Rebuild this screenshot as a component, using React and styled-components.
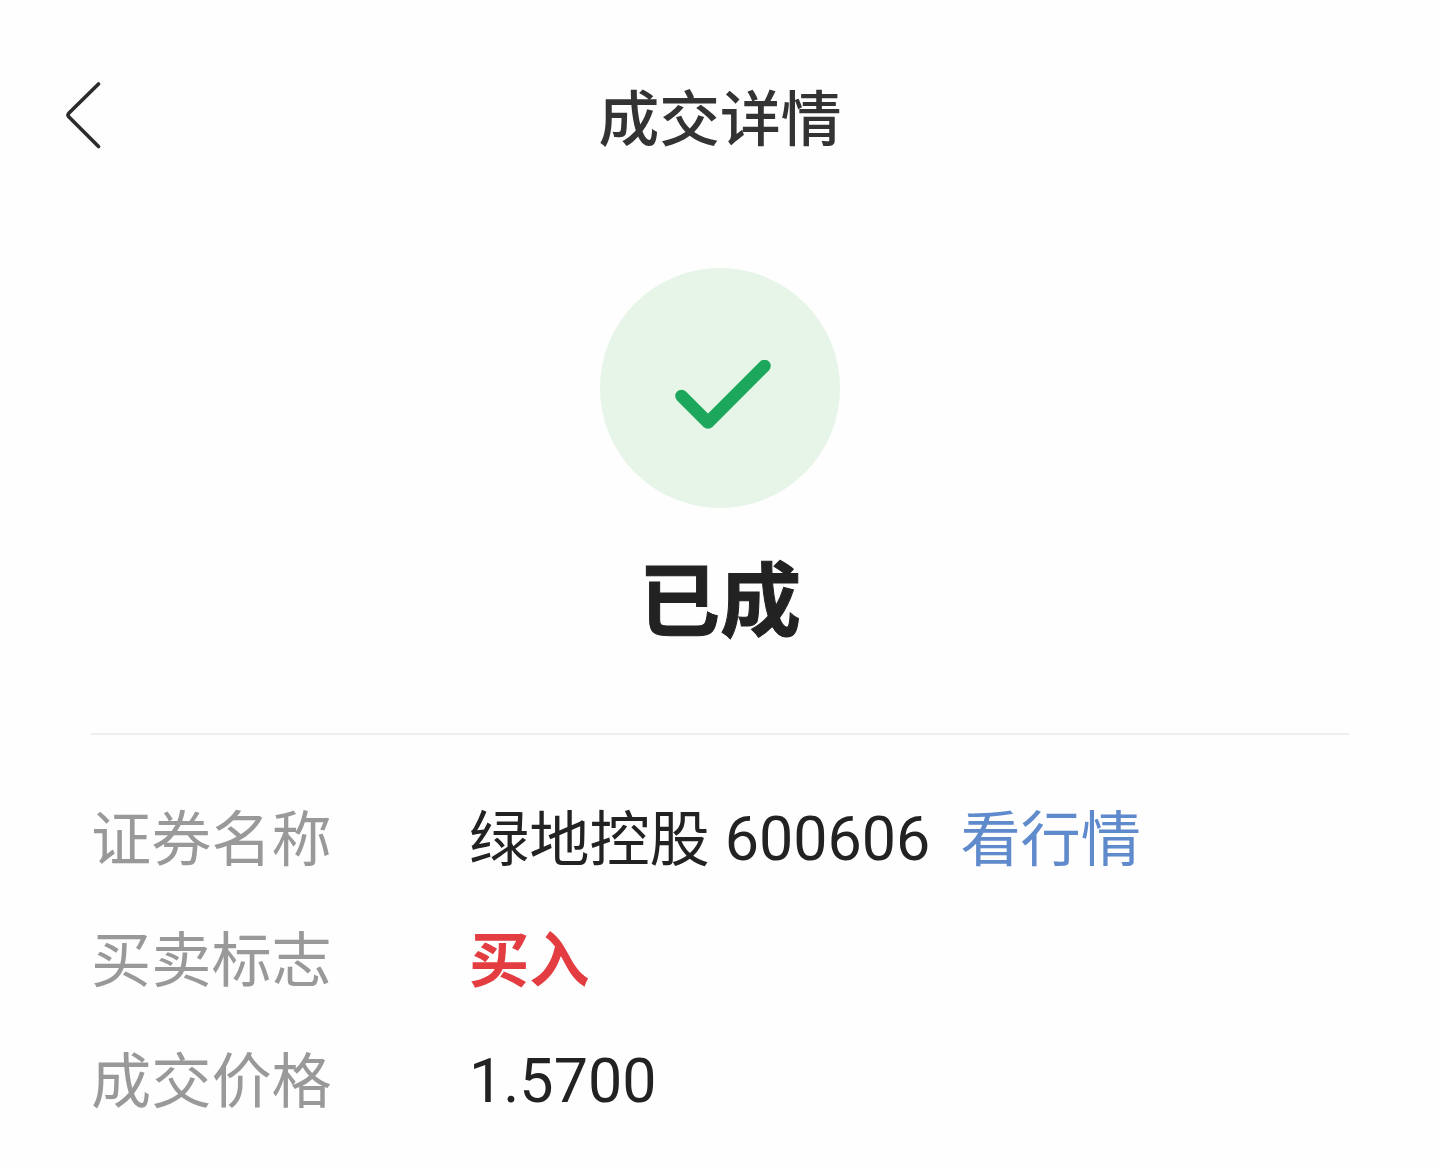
import styled, { createGlobalStyle } from "styled-components"

const App = () => {
    return (
        <Page>
            <GlobalStyle />
            <Header>
                <BackBtn aria-label="返回">
                    <svg width="36" height="68" viewBox="0 0 36 68">
                        <path d="M33.5 2 L4 31 Q2 33 4 35 L33.5 64.5" />
                    </svg>
                </BackBtn>
                <Title>成交详情</Title>
            </Header>
            <Status>
                <Circle>
                    <svg width="96" height="70" viewBox="0 0 96 70">
                        <path d="M6.5 36 L33 62.5 L89.5 6" />
                    </svg>
                </Circle>
                <StatusText>已成</StatusText>
            </Status>
            <Details>
                <Row>
                    <Label>证券名称</Label>
                    <Value>绿地控股 <Num>600606</Num></Value>
                    <QuoteLink>看行情</QuoteLink>
                </Row>
                <Row>
                    <Label>买卖标志</Label>
                    <Value $buy>买入</Value>
                </Row>
                <Row>
                    <Label>成交价格</Label>
                    <Value><Num>1.5700</Num></Value>
                </Row>
            </Details>
        </Page>
    )
}
export default App

const GlobalStyle = createGlobalStyle`
body {
    margin: 0;
    background-color: #fefefe;
}
`
const Page = styled.div`
box-sizing: border-box;
height: 1171px;
overflow: hidden;
background-color: #fefefe;
color: #222222;
font-family: Roboto, "Noto Sans CJK SC", sans-serif;
`
const Header = styled.header`
display: grid;
grid-template-columns: 1fr auto 1fr;
align-items: center;
height: 232px;
padding: 0px 65px;
box-sizing: border-box;
`
const BackBtn = styled.button`
display: flex;
width: 36px;
padding: 0px;
border: none;
background-color: transparent;
svg{
    fill: none;
    stroke: #2b2b2b;
    stroke-width: 3.6;
    stroke-linecap: round;
}
`
const Title = styled.h1`
margin: 10px 0px 0px;
font-size: 60.8px;
font-weight: 500;
line-height: 80px;
color: #333333;
`
const Status = styled.section`
display: flex;
flex-direction: column;
align-items: center;
height: 501px;
padding-top: 36px;
box-sizing: border-box;
`
const Circle = styled.div`
display: flex;
justify-content: center;
align-items: center;
width: 240px;
height: 240px;
padding: 13px 0px 0px 5px;
box-sizing: border-box;
border-radius: 50%;
background-color: #e6f5e8;
svg{
    fill: none;
    stroke: #1ca75c;
    stroke-width: 12.5;
    stroke-linecap: round;
    stroke-linejoin: round;
}
`
const StatusText = styled.h2`
margin: 45px 0px 0px;
font-size: 81px;
font-weight: 700;
line-height: 100px;
-webkit-text-stroke: 1px #222222;
`
const Details = styled.section`
margin: 0px 91px;
padding-top: 45px;
border-top: 2px solid #eeeeee;
`
const Row = styled.div`
display: flex;
align-items: center;
height: 121px;
font-size: 60.2px;
line-height: 80px;
white-space: nowrap;
`
const Label = styled.span`
width: 378px;
flex-shrink: 0;
color: #999999;
`
const Value = styled.span`
color: ${(props) => (props.$buy ? "#e33c41" : "#222222")};
font-weight: ${(props) => (props.$buy ? 700 : 400)};
`
const Num = styled.span`
font-size: 61px;
line-height: 1;
vertical-align: 1px;
`
const QuoteLink = styled.a`
margin-left: 30px;
color: #5f8acb;
`
